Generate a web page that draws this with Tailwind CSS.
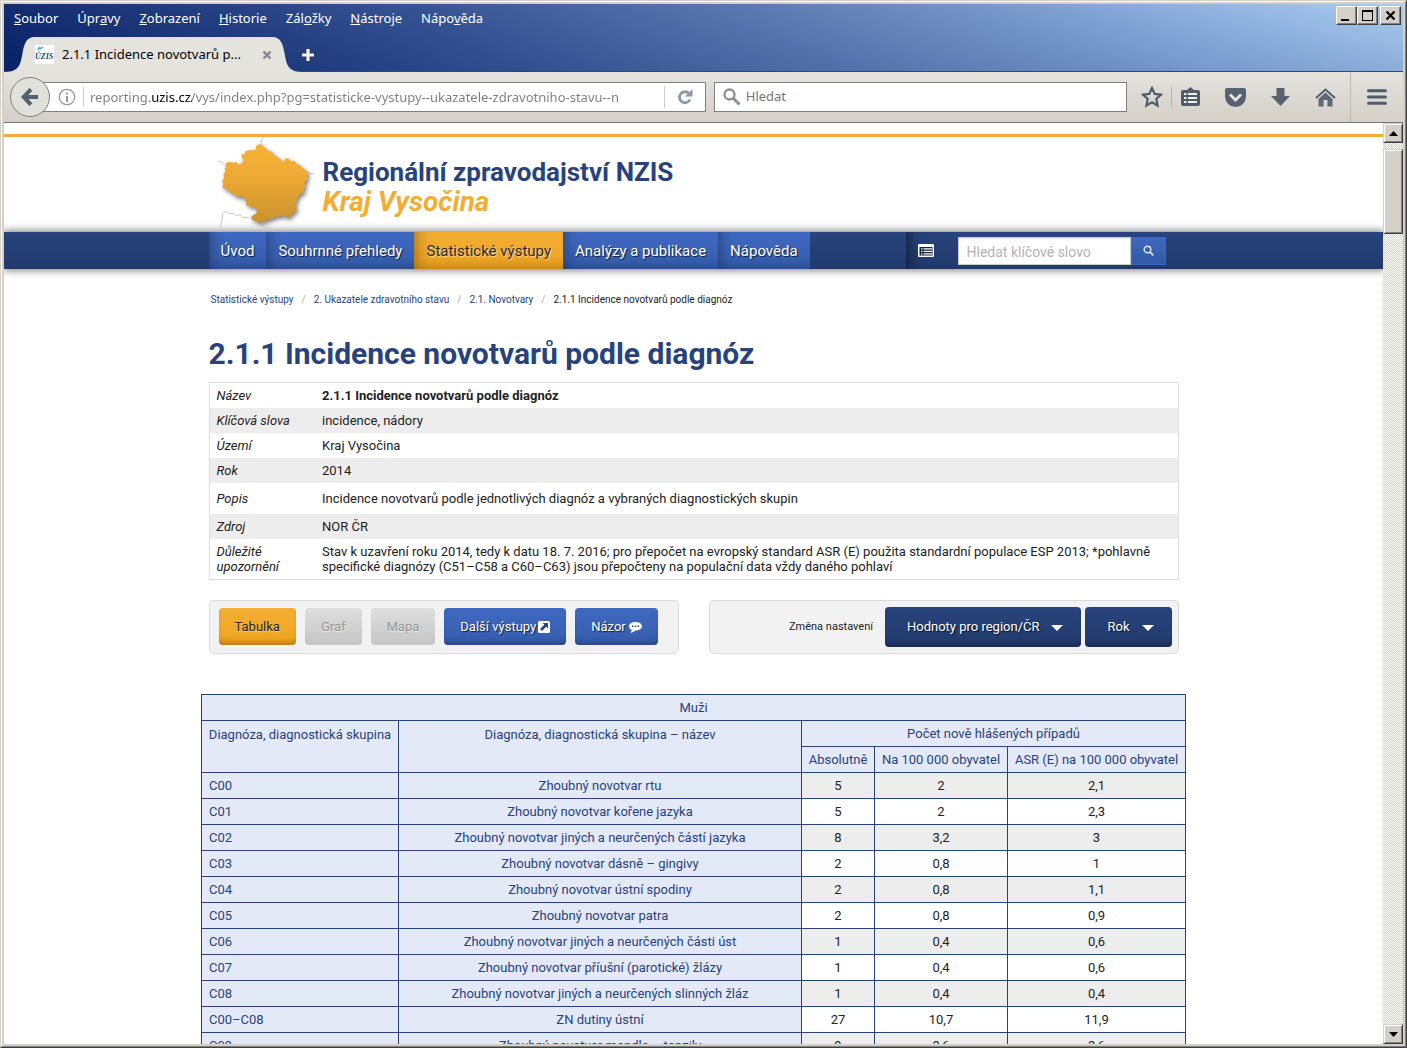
<!DOCTYPE html>
<html lang="cs">
<head>
<meta charset="utf-8">
<title>2.1.1 Incidence novotvarů podle diagnóz</title>
<script src="https://cdn.jsdelivr.net/npm/@tailwindcss/browser@4"></script>
</head>
<body class="h-screen overflow-hidden bg-[#d4d0c8] font-[Roboto,sans-serif] text-[13px] text-[#222]">
<div class="flex h-full flex-col border border-t-[#d4d0c8] border-r-[#404040] border-b-[#404040] border-l-[#d4d0c8]">
<div class="flex min-h-0 flex-1 flex-col border border-t-white border-r-[#808080] border-b-[#808080] border-l-white p-[2px]">

  <!-- Title bar: menu, window buttons, tabs -->
  <header class="flex h-[68px] shrink-0 flex-col justify-between border-b border-[#2b4a7c] bg-[linear-gradient(to_bottom,rgba(255,255,255,0.04),rgba(0,20,90,0.16)),linear-gradient(to_right,#0a246a,#2f4e90_30%,#5c7db5_58%,#8cb0e0_85%,#a6caf0)] font-['Noto_Sans',sans-serif]">
    <div class="flex items-start justify-between">
      <nav class="flex gap-[19px] pt-1 pl-[10px] text-[13px] leading-5 text-white" aria-label="Menu">
        <a href="#"><u>S</u>oubor</a><a href="#">Úpr<u>a</u>vy</a><a href="#"><u>Z</u>obrazení</a><a href="#"><u>H</u>istorie</a><a href="#">Zál<u>o</u>žky</a><a href="#"><u>N</u>ástroje</a><a href="#">Nápo<u>v</u>ěda</a>
      </nav>
      <div class="flex pt-[2px] pr-[2px]">
        <button aria-label="Minimalizovat" class="h-[19px] w-[21px] border border-t-white border-r-[#404040] border-b-[#404040] border-l-white bg-[#d4d0c8] shadow-[inset_-1px_-1px_#808080]"><svg class="size-full" viewBox="0 0 19 17"><path d="M4 12h8v2H4z"/></svg></button>
        <button aria-label="Maximalizovat" class="h-[19px] w-[21px] border border-t-white border-r-[#404040] border-b-[#404040] border-l-white bg-[#d4d0c8] shadow-[inset_-1px_-1px_#808080]"><svg class="size-full" viewBox="0 0 19 17"><path fill-rule="evenodd" d="M4 3h11v11H4zM5 5v8h9V5z"/></svg></button>
        <button aria-label="Zavřít" class="ml-[2px] h-[19px] w-[21px] border border-t-white border-r-[#404040] border-b-[#404040] border-l-white bg-[#d4d0c8] shadow-[inset_-1px_-1px_#808080]"><svg class="size-full" viewBox="0 0 19 17"><path d="M5.500 4.500l8 8M13.500 4.500l-8 8" stroke="#000" stroke-width="2.200"/></svg></button>
      </div>
    </div>
    <div class="-mb-px flex h-[35px] items-stretch">
      <svg class="w-[31px] shrink-0" viewBox="0 0 31 35"><path fill="#e4e3de" d="M0 35C14 35 16 29 18 19 20 7 22 0 31 0V35z"/></svg>
      <div class="flex w-[237px] items-center bg-[#e4e3de] text-[13px] text-black">
        <svg class="mr-2 size-[19px] shrink-0" viewBox="0 0 19 19"><path fill="#fff" d="M0 0h19v19H0z"/><path d="M3 5l2-3M5 4l3-2" stroke="#43a6d0" stroke-width="1.500"/><text x="0" y="14" font-family="Liberation Serif" font-style="italic" font-weight="bold" font-size="8" fill="#16476e">ÚZIS</text></svg>
        <span class="flex-1 whitespace-nowrap">2.1.1 Incidence novotvarů p...</span>
        <button aria-label="Zavřít panel" class="shrink-0"><svg class="size-[10px]" viewBox="0 0 10 10"><path d="M1.500 1.500l7 7M8.500 1.500l-7 7" stroke="#85878b" stroke-width="2.400"/></svg></button>
      </div>
      <svg class="w-[31px] shrink-0" viewBox="0 0 31 35"><path fill="#e4e3de" d="M0 0C9 0 11 7 13 19 15 29 17 35 31 35H0z"/></svg>
      <button aria-label="Nový panel" class="-ml-[3px] self-center"><svg class="size-4" viewBox="0 0 16 16"><path d="M8 1v14M1 8h14" stroke="#2b3c62" stroke-width="5.500"/><path d="M8 2v12M2 8h12" stroke="#f4f4f2" stroke-width="3.200"/></svg></button>
    </div>
  </header>

  <!-- Address and search toolbar -->
  <div class="flex h-[51px] shrink-0 items-center border-b border-[#77767a] bg-linear-to-b from-[#e4e3de] to-[#d4d0c8] pl-[6px] font-['Noto_Sans',sans-serif] text-[13px]">
    <button aria-label="Zpět" class="z-10 flex size-10 shrink-0 items-center justify-center rounded-full border border-[#7f7f7f] bg-[#e2e0da]"><svg class="size-[18px]" viewBox="0 0 20 20"><path d="M11 1.500L3 10l8 8.500M3.500 10H19" fill="none" stroke="#55616e" stroke-width="4.500"/></svg></button>
    <div class="-ml-[10px] flex h-[30px] min-w-0 flex-[664] items-center border border-[#7f7f7f] bg-white pl-[17px]">
      <svg class="size-[18px] shrink-0" viewBox="0 0 18 18"><circle cx="9" cy="9" r="7.700" fill="none" stroke="#999" stroke-width="1.300"/><path d="M8 4.500h2v2H8zM8 8h2v6H8z" fill="#999"/></svg>
      <input aria-label="Adresa" class="ml-[7px] h-5 min-w-0 flex-1 border-l border-[#ccc] bg-[linear-gradient(to_right,#7c7c7c_66px,#000_66px,#000_108px,#7c7c7c_108px)] bg-clip-text pl-[6px] text-transparent outline-none" value="reporting.uzis.cz/vys/index.php?pg=statisticke-vystupy--ukazatele-zdravotniho-stavu--n">
      <button aria-label="Obnovit" class="flex h-[22px] w-[41px] shrink-0 items-center justify-center border-l border-[#ccc]"><svg class="size-[16px]" viewBox="0 0 16 16"><path d="M12 4.500A5.500 5.500 0 1 0 13 10.500" fill="none" stroke="#8b98a6" stroke-width="2.800"/><path d="M15.500 0v7.500H8z" fill="#8b98a6"/></svg></button>
    </div>
    <label class="ml-2 flex h-[30px] min-w-0 flex-[414] items-center border border-[#7f7f7f] bg-white pl-2">
      <svg class="size-[18px] shrink-0" viewBox="0 0 18 18"><circle cx="6.500" cy="6.500" r="5" fill="none" stroke="#8f8f8f" stroke-width="2.300"/><path d="M10 10l6.500 6.500" stroke="#8f8f8f" stroke-width="3"/></svg>
      <input aria-label="Hledat" placeholder="Hledat" class="ml-[5px] min-w-0 flex-1 outline-none placeholder:text-[#757575]">
    </label>
    <div class="flex shrink-0 items-center self-stretch pl-[14px]">
      <button aria-label="Záložka"><svg class="size-[22px]" viewBox="0 0 22 22"><path d="M11 2l2.700 5.900 6.300.7-4.700 4.400 1.300 6.500L11 16.300l-5.600 3.200 1.300-6.500L2 8.600l6.300-.7z" fill="none" stroke="#505c69" stroke-width="2.200"/></svg></button>
      <span class="mr-[9px] ml-[8px] h-5 w-px bg-[#b5b2ac]"></span>
      <button aria-label="Seznam"><svg class="h-[20px] w-[19px]" viewBox="0 0 19 20"><path d="M2 3h4l3.500-3L13 3h4q2 0 2 2v12q0 2-2 2H2q-2 0-2-2V5q0-2 2-2z" fill="#505c69"/><path d="M3 6h2.500v2H3zM7 6h9v2H7zM3 10h2.500v2H3zM7 10h9v2H7zM3 14h2.500v2H3zM7 14h9v2H7z" fill="#eef0e8"/></svg></button>
      <button aria-label="Pocket" class="ml-[25px]"><svg class="h-[19px] w-[21px]" viewBox="0 0 21 19"><path d="M2 0h17q2 0 2 2v6.500a10.500 10.500 0 0 1-21 0V2q0-2 2-2z" fill="#566270"/><path d="M5 6.500l5.500 5.500L16 6.500" fill="none" stroke="#e8e6e2" stroke-width="2.800"/></svg></button>
      <button aria-label="Stažené soubory" class="ml-[25px]"><svg class="h-[18px] w-[19px]" viewBox="0 0 19 18"><path d="M5.500 0h8v8H19l-9.500 10L0 8h5.500z" fill="#566270"/></svg></button>
      <button aria-label="Domů" class="ml-[25px]"><svg class="h-[19px] w-[21px]" viewBox="0 0 21 19"><path d="M1 10L10.500 1.500 20 10" fill="none" stroke="#505c69" stroke-width="2"/><path d="M3.500 11l7-6.500 7 6.500v7.500h-5V12h-4v6.500h-5z" fill="#5d6976"/></svg></button>
      <button aria-label="Nabídka" class="ml-[14px] flex h-full w-[53px] items-center justify-center border-l border-[#bdbab4]"><svg class="h-4 w-5" viewBox="0 0 20 16"><path d="M1.500 1.700h17M1.500 8h17M1.500 14.300h17" stroke="#505c69" stroke-width="3" stroke-linecap="round"/></svg></button>
    </div>
  </div>

  <div class="flex min-h-0 flex-1">
    <main class="min-w-0 flex-1 overflow-hidden bg-white pt-[11px]">
      <div class="border-t-[3px] border-[#f2ae34]">
        <div class="mx-auto flex h-[95px] max-w-[970px] items-center">
          <svg class="h-[95px] w-[110px] shrink-0" viewBox="27 21 330 285">
            <defs><linearGradient id="g" x2="0" y2="1"><stop stop-color="#f6b336"/><stop offset=".4" stop-color="#eeaa34"/><stop offset="1" stop-color="#c9922f"/></linearGradient></defs>
            <path d="M183 42l3-12 5-9M57 92l12 8 7 10M322 128l10 3 10-1M58 306l4-20 5-20 1-15 7-8 12 8 14-1 8 7 12-3 8 10 16-3 10 8 8-2M178 279l14 10 8 8 12-2 9 11" fill="none" stroke="#c8c8c8" stroke-width="3"/>
            <path class="drop-shadow-[5px_7px_6px_rgba(0,0,0,0.5)]" fill="url(#g)" d="M180 42L188 45 190 54 198 55 204 62 213 63 219 69 221 77 230 79 236 85 241 86 245 96 252 94 258 84 266 86 270 92 284 94 291 102 302 107 306 114 316 119 325 127 320 137 323 148 314 156 316 168 311 178 313 190 301 190 298 198 292 203 290 214 284 222 290 234 286 246 277 250 270 262 262 263 257 258 244 257 236 261 225 260 216 268 206 267 196 276 184 274 177 279 168 272 160 272 153 261 160 254 168 251 172 243 168 235 158 232 150 228 138 226 141 216 134 212 136 205 124 199 112 202 101 191 92 188 84 179 76 176 67 173 70 162 66 152 73 144 70 132 76 126 74 116 79 110 77 99 88 95 100 98 110 96 114 104 124 101 128 95 135 91 126 84 124 73 134 72 136 64 148 60 162 61 168 56 168 47z"/>
          </svg>
          <div class="ml-1 pt-[5px] font-bold">
            <p class="text-[26px] leading-[30px] text-[#28437b]">Regionální zpravodajství NZIS</p>
            <p class="text-[28px] leading-[30px] text-[#f2ae34] italic">Kraj Vysočina</p>
          </div>
        </div>
      </div>

      <nav class="bg-linear-to-b from-[#28447e] to-[#213a6c] shadow-[0_0_8px_1px_rgba(0,0,0,0.55)]" aria-label="Hlavní navigace">
        <div class="mx-auto flex h-[37px] max-w-[970px] items-stretch text-[15px] leading-[38px] text-white text-shadow-[1px_1px_1px_rgba(0,0,0,0.7)]">
          <a href="#" class="bg-linear-to-b from-[#3f69c2] to-[#355dac] px-3 shadow-[inset_9px_-6px_16px_-8px_rgba(0,0,0,0.4)]">Úvod</a>
          <a href="#" class="bg-linear-to-b from-[#3f69c2] to-[#355dac] px-3 shadow-[inset_9px_-6px_16px_-8px_rgba(0,0,0,0.4)]">Souhrnné přehledy</a>
          <a href="#" class="bg-linear-to-b from-[#f2ae34] to-[#efa41c] px-3 text-[#2a2a2a] shadow-[inset_9px_-6px_16px_-8px_rgba(0,0,0,0.4)] text-shadow-[1px_1px_1px_rgba(255,255,255,0.6)]">Statistické výstupy</a>
          <a href="#" class="bg-linear-to-b from-[#3f69c2] to-[#355dac] px-3 shadow-[inset_9px_-6px_16px_-8px_rgba(0,0,0,0.4)]">Analýzy a publikace</a>
          <a href="#" class="bg-linear-to-b from-[#3f69c2] to-[#355dac] px-3 shadow-[inset_9px_-6px_16px_-8px_rgba(0,0,0,0.4)]">Nápověda</a>
          <a href="#" aria-label="Výpis" class="ml-auto flex w-[52px] items-center pl-3 shadow-[inset_16px_0_16px_-14px_rgba(0,0,0,0.6)]"><svg class="h-[13px] w-4" viewBox="0 0 16 13"><path d="M1 0h14q1 0 1 1v11q0 1-1 1H1q-1 0-1-1V1q0-1 1-1z" fill="#fff"/><path d="M1.500 3h13v8.500h-13z" fill="#111f3c"/><path d="M3 4.200h1.500v1.200H3zM5.500 4.200H14v1.200H5.500zM3 6.700h1.500v1.200H3zM5.500 6.700H14v1.200H5.500zM3 9.200h1.500v1.200H3zM5.500 9.200H14v1.200H5.500z" fill="#fff"/></svg></a>
          <input aria-label="Hledat klíčové slovo" placeholder="Hledat klíčové slovo" class="h-[28px] w-[173px] self-center border border-[#ccc] bg-white px-2 pt-[2px] text-[14px] text-black shadow-[inset_0_1px_2px_rgba(0,0,0,0.1)] placeholder:text-[#b3b3b3] text-shadow-none">
          <button aria-label="Hledat" class="mr-[13px] flex h-[28px] w-[35px] items-center justify-center self-center border border-[#3a66c4] bg-linear-to-b from-[#4069c0] to-[#3158a4]"><svg class="size-[11px]" viewBox="0 0 11 11"><circle cx="4.500" cy="4.500" r="3.300" fill="none" stroke="#e2e8f4" stroke-width="1.400"/><path d="M7 7l3.300 3.300" stroke="#e2e8f4" stroke-width="1.700"/></svg></button>
        </div>
      </nav>

      <div class="mx-auto max-w-[970px]">
        <ol class="flex pt-[25px] pl-[2px] text-[10px] leading-3 text-[#28437b]">
          <li><a href="#">Statistické výstupy</a></li>
          <li class="before:mx-2 before:text-[#aaa] before:content-['/']"><a href="#">2. Ukazatele zdravotního stavu</a></li>
          <li class="before:mx-2 before:text-[#aaa] before:content-['/']"><a href="#">2.1. Novotvary</a></li>
          <li class="text-[#222] before:mx-2 before:text-[#aaa] before:content-['/']">2.1.1 Incidence novotvarů podle diagnóz</li>
        </ol>
        <h1 class="mt-[28px] text-[30px] leading-[40px] font-bold text-[#28437b]">2.1.1 Incidence novotvarů podle diagnóz</h1>

        <table class="mt-2 w-full border border-[#ddd] text-left align-middle leading-[15px] [&_td]:py-[5px] [&_th]:w-[113px] [&_th]:py-[5px] [&_th]:pr-5 [&_th]:pl-[7px] [&_th]:font-normal [&_th]:italic [&_tr:nth-child(even)]:bg-[#ededed]">
          <tbody>
            <tr><th scope="row">Název</th><td class="font-bold">2.1.1 Incidence novotvarů podle diagnóz</td></tr>
            <tr><th scope="row">Klíčová slova</th><td>incidence, nádory</td></tr>
            <tr><th scope="row">Území</th><td>Kraj Vysočina</td></tr>
            <tr><th scope="row">Rok</th><td>2014</td></tr>
            <tr class="h-[31px]"><th scope="row">Popis</th><td>Incidence novotvarů podle jednotlivých diagnóz a vybraných diagnostických skupin</td></tr>
            <tr><th scope="row">Zdroj</th><td>NOR ČR</td></tr>
            <tr><th scope="row">Důležité upozornění</th><td class="pr-5">Stav k uzavření roku 2014, tedy k datu 18. 7. 2016; pro přepočet na evropský standard ASR (E) použita standardní populace ESP 2013; *pohlavně specifické diagnózy (C51–C58 a C60–C63) jsou přepočteny na populační data vždy daného pohlaví</td></tr>
          </tbody>
        </table>

        <div class="mt-5 grid grid-cols-2 gap-[30px]">
          <div class="flex h-[54px] items-center gap-[9px] rounded-[5px] border border-[#d9d9d9] bg-[#f2f2f2] pb-[1px] pl-[9px] text-white">
            <button class="h-[37px] rounded-[4px] bg-linear-to-b from-[#f2ae34] to-[#efa41c] px-4 text-[#222] shadow-[inset_0_-6px_6px_-4px_rgba(0,0,0,0.3)] text-shadow-[0_1px_1px_rgba(255,255,255,0.5)]">Tabulka</button>
            <button disabled class="h-[37px] rounded-[4px] bg-linear-to-b from-[#dedede] to-[#c6c6c6] px-4 text-[#969696] text-shadow-[0_1px_1px_rgba(255,255,255,0.7)]">Graf</button>
            <button disabled class="h-[37px] rounded-[4px] bg-linear-to-b from-[#dedede] to-[#c6c6c6] px-4 text-[#969696] text-shadow-[0_1px_1px_rgba(255,255,255,0.7)]">Mapa</button>
            <button class="flex h-[37px] items-center gap-[2px] rounded-[4px] bg-linear-to-b from-[#3f69c2] to-[#355dac] px-4 shadow-[inset_0_-6px_6px_-4px_rgba(0,0,0,0.3)] text-shadow-[1px_1px_1px_rgba(0,0,0,0.7)]">Další výstupy <svg class="size-3" viewBox="0 0 12 12"><rect width="12" height="12" rx="1.500" fill="#fff"/><path d="M4.500 2H10v5.500L8.200 5.700 4 10 2 8l4.300-4.200z" fill="#24427e"/></svg></button>
            <button class="flex h-[37px] items-center gap-[3px] rounded-[4px] bg-linear-to-b from-[#3f69c2] to-[#355dac] px-4 shadow-[inset_0_-6px_6px_-4px_rgba(0,0,0,0.3)] text-shadow-[1px_1px_1px_rgba(0,0,0,0.7)]">Názor <svg class="h-3 w-[13px]" viewBox="0 0 13 12"><path d="M6.500 1C10 1 13 2.800 13 5.300S10 9.600 6.500 9.600L6 9.600C5 11 3 11.800 1.200 11.700 2.200 11 2.700 10 2.700 8.900 1 8.100 0 6.800 0 5.300 0 2.800 3 1 6.500 1z" fill="#fff"/><path d="M3 4.600h1.500v1.500H3zM5.800 4.600h1.500v1.500H5.800zM8.600 4.600h1.500v1.500H8.600z" fill="#24427e"/></svg></button>
          </div>
          <div class="flex h-[54px] items-center justify-end gap-1 rounded-[5px] border border-[#d9d9d9] bg-[#f2f2f2] pr-[6px] text-white">
            <span class="mr-2 text-[11px] text-[#222]">Změna nastavení</span>
            <button aria-haspopup="menu" class="flex h-10 items-center gap-3 rounded-[4px] bg-linear-to-b from-[#28447e] to-[#213a6c] pr-[18px] pl-[22px] shadow-[inset_0_-6px_6px_-4px_rgba(0,0,0,0.3)] text-shadow-[1px_1px_1px_rgba(0,0,0,0.7)]">Hodnoty pro region/ČR <svg class="mt-[2px] h-[6px] w-3" viewBox="0 0 12 6"><path d="M0 0h12L6 6z" fill="#fff"/></svg></button>
            <button aria-haspopup="menu" class="flex h-10 items-center gap-3 rounded-[4px] bg-linear-to-b from-[#28447e] to-[#213a6c] pr-[18px] pl-[22px] shadow-[inset_0_-6px_6px_-4px_rgba(0,0,0,0.3)] text-shadow-[1px_1px_1px_rgba(0,0,0,0.7)]">Rok <svg class="mt-[2px] h-[6px] w-3" viewBox="0 0 12 6"><path d="M0 0h12L6 6z" fill="#fff"/></svg></button>
          </div>
        </div>
      </div>

      <table class="mx-auto mt-10 w-[985px] table-fixed border-collapse text-center leading-[15px] [&_tbody_tr:nth-child(odd)]:bg-[#ededed] [&_td]:h-[26px] [&_td]:border [&_td]:border-[#28437b] [&_th]:h-[26px] [&_th]:border [&_th]:border-[#28437b] [&_th]:bg-[#e3e9f6] [&_th]:font-normal [&_th]:text-[#28437b] [&_tbody_th:first-child]:pl-[7px] [&_tbody_th:first-child]:text-left">
        <colgroup><col class="w-[197px]"><col class="w-[403px]"><col class="w-[73px]"><col class="w-[133px]"><col class="w-[178px]"></colgroup>
        <thead>
          <tr><th colspan="5">Muži</th></tr>
          <tr><th rowspan="2" class="pt-[6px] align-top">Diagnóza, diagnostická skupina</th><th rowspan="2" class="pt-[6px] align-top">Diagnóza, diagnostická skupina – název</th><th colspan="3">Počet nově hlášených případů</th></tr>
          <tr><th>Absolutně</th><th>Na 100 000 obyvatel</th><th>ASR (E) na 100 000 obyvatel</th></tr>
        </thead>
        <tbody>
          <tr><th>C00</th><th>Zhoubný novotvar rtu</th><td>5</td><td>2</td><td>2,1</td></tr>
          <tr><th>C01</th><th>Zhoubný novotvar kořene jazyka</th><td>5</td><td>2</td><td>2,3</td></tr>
          <tr><th>C02</th><th>Zhoubný novotvar jiných a neurčených částí jazyka</th><td>8</td><td>3,2</td><td>3</td></tr>
          <tr><th>C03</th><th>Zhoubný novotvar dásně – gingivy</th><td>2</td><td>0,8</td><td>1</td></tr>
          <tr><th>C04</th><th>Zhoubný novotvar ústní spodiny</th><td>2</td><td>0,8</td><td>1,1</td></tr>
          <tr><th>C05</th><th>Zhoubný novotvar patra</th><td>2</td><td>0,8</td><td>0,9</td></tr>
          <tr><th>C06</th><th>Zhoubný novotvar jiných a neurčených části úst</th><td>1</td><td>0,4</td><td>0,6</td></tr>
          <tr><th>C07</th><th>Zhoubný novotvar příušní (parotické) žlázy</th><td>1</td><td>0,4</td><td>0,6</td></tr>
          <tr><th>C08</th><th>Zhoubný novotvar jiných a neurčených slinných žláz</th><td>1</td><td>0,4</td><td>0,4</td></tr>
          <tr><th>C00–C08</th><th>ZN dutiny ústní</th><td>27</td><td>10,7</td><td>11,9</td></tr>
          <tr><th>C09</th><th>Zhoubný novotvar mandle – tonzily</th><td>9</td><td>3,6</td><td>3,6</td></tr>
        </tbody>
      </table>
    </main>

    <!-- Scrollbar -->
    <div class="flex w-5 shrink-0 flex-col bg-[repeating-conic-gradient(#d4d0c8_0_25%,#fff_0_50%)] bg-[length:2px_2px]">
      <button aria-label="Nahoru" class="flex h-5 shrink-0 items-center justify-center border border-t-[#d4d0c8] border-r-[#404040] border-b-[#404040] border-l-[#d4d0c8] bg-[#d4d0c8] shadow-[inset_1px_1px_#fff,inset_-1px_-1px_#808080]"><svg class="h-[5px] w-[9px]" viewBox="0 0 9 5"><path d="M4.500 0L9 5H0z"/></svg></button>
      <div class="mt-[6px] h-[85px] border border-t-[#d4d0c8] border-r-[#404040] border-b-[#404040] border-l-[#d4d0c8] bg-[#d4d0c8] shadow-[inset_1px_1px_#fff,inset_-1px_-1px_#808080]"></div>
      <button aria-label="Dolů" class="mt-auto flex h-5 shrink-0 items-center justify-center border border-t-[#d4d0c8] border-r-[#404040] border-b-[#404040] border-l-[#d4d0c8] bg-[#d4d0c8] shadow-[inset_1px_1px_#fff,inset_-1px_-1px_#808080]"><svg class="h-[5px] w-[9px]" viewBox="0 0 9 5"><path d="M0 0h9L4.500 5z"/></svg></button>
    </div>
  </div>
</div>
</div>
</body>
</html>
